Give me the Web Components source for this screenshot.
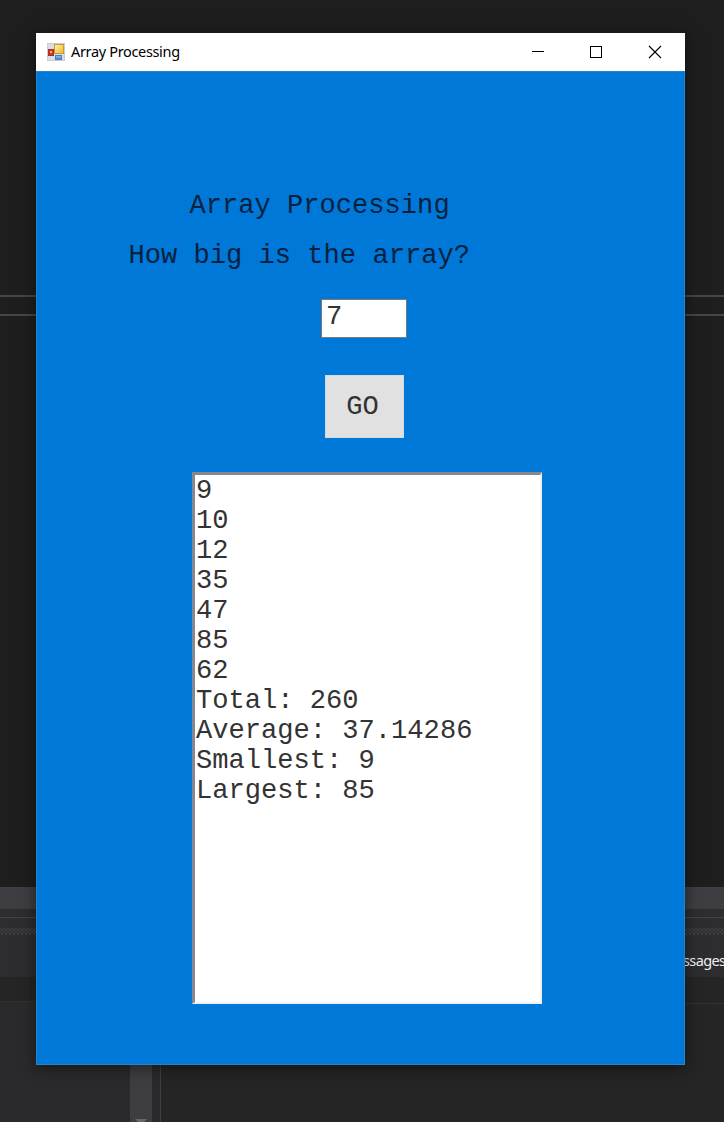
<!DOCTYPE html>
<html lang="en"><head><meta charset="utf-8"><title>Array Processing</title>
<style>html,body{margin:0;width:724px;height:1122px;overflow:hidden;background:#1e1e1e}</style></head>
<body>
<desk-top>
  <ide-backdrop slot="back"></ide-backdrop>
  <app-window caption="Array Processing">
    <form-label style="margin:119px 0 0 152.5px">Array Processing</form-label>
    <form-label style="margin:20px 0 0 91.5px">How big is the array?</form-label>
    <text-box style="margin:28px 0 0 284px">7</text-box>
    <push-button style="margin:37px 0 0 288px">GO</push-button>
    <list-box style="margin:34px 0 0 155px">
      <div>9</div><div>10</div><div>12</div><div>35</div><div>47</div><div>85</div><div>62</div>
      <div>Total: 260</div><div>Average: 37.14286</div><div>Smallest: 9</div><div>Largest: 85</div>
    </list-box>
  </app-window>
</desk-top>
<script>
const define = (name, html, setup) => {
  const t = document.createElement('template');
  t.innerHTML = html;
  customElements.define(name, class extends HTMLElement {
    constructor() {
      super();
      this.attachShadow({mode: 'open'}).append(t.content.cloneNode(true));
    }
    connectedCallback() { if (setup) setup(this); }
  });
};

define('desk-top', `<style>
:host{display:block;position:relative;width:724px;height:1122px;overflow:hidden}
::slotted(app-window){position:absolute;left:36px;top:33px}
</style><slot name="back"></slot><slot></slot>`);

define('ide-backdrop', `<style>
:host{display:flex;flex-direction:column;height:1122px;background:#1e1e1e;box-sizing:border-box}
.rule{height:2px;background:#464648;flex:none}
.editor{height:887px;flex:none;display:flex;flex-direction:column;gap:17px;padding-top:295px;box-sizing:border-box}
.scroll{height:22px;background:#3e3e42;flex:none}
.tools{height:68px;background:#2d2d30;flex:none;display:flex;flex-direction:column}
.line{height:1px;background:#434346;margin-top:8px}
.dots{height:7px;margin-top:10px;background-image:radial-gradient(circle,#404043 0.7px,transparent 1px),radial-gradient(circle,#404043 0.7px,transparent 1px);background-size:4px 4px;background-position:0 0,2px 2px}
.tab{font:14.5px/20px "Noto Sans","Open Sans",sans-serif;letter-spacing:-.6px;color:#f1f1f1;align-self:flex-end;margin-top:15px;width:41px;white-space:nowrap}
.pane{flex:1;display:grid;grid-template-columns:130px 22px 8px 1px 1fr;background:#252526}
.left{background:#2a2a2c;border-top:1px solid #323234;margin-top:24px}
.cell{background:#2a2a2c}
.bar{background:#3e3e42;display:flex;flex-direction:column;justify-content:flex-end;align-items:center}
.edge{background:#3f3f43}
.right{border-top:1px solid #333335;margin-top:26px}
svg{display:block}
</style>
<div class="editor"><div class="rule"></div><div class="rule"></div></div>
<div class="scroll"></div>
<div class="tools"><div class="line"></div><div class="dots"></div><div class="tab">ssages</div></div>
<div class="pane"><div class="left"></div><div class="bar"><svg width="12" height="3"><path d="M0 0H12L9 3H3Z" fill="#68686c"/></svg></div><div class="cell"></div><div class="edge"></div><div class="right"></div></div>`);

define('title-bar', `<style>
:host{display:flex;height:38px;background:#fff;align-items:center;padding-left:11px;box-sizing:border-box;color:#000;flex:none}
svg{display:block;flex:none}
.text{font:14.5px/20px "Noto Sans","Open Sans",sans-serif;letter-spacing:-.34px;margin-left:6px;padding-bottom:2px;flex:1;white-space:nowrap}
.buttons{display:flex}
.buttons svg{width:59px;height:38px}
</style>
<svg width="18" height="18" viewBox="0 0 18 18">
<defs><linearGradient id="y" x2="1" y2="1"><stop stop-color="#fff3a4"/><stop offset="1" stop-color="#edb92c"/></linearGradient>
<linearGradient id="b" x2="0" y2="1"><stop stop-color="#9dcaff"/><stop offset="1" stop-color="#337bd1"/></linearGradient></defs>
<rect x=".5" y=".5" width="17" height="17" fill="#dcdce2" stroke="#c9ccd4"/>
<rect x="7.5" y="1.5" width="9" height="9" fill="url(#y)" stroke="#c79a32"/>
<rect x="1.5" y="6.5" width="5" height="6" fill="#c9382e" stroke="#a92e26"/><rect x="3" y="8" width="2" height="2" fill="#f3a797"/>
<rect x="8.5" y="12.5" width="6" height="4" fill="url(#b)" stroke="#4b80bd"/>
</svg>
<span class="text"></span>
<div class="buttons">
<svg viewBox="0 0 59 38"><path d="M24 18.5h12" stroke="#000"/></svg>
<svg viewBox="0 0 59 38"><rect x="23.5" y="13.5" width="11" height="11" fill="none" stroke="#000"/></svg>
<svg viewBox="0 0 59 38"><path d="M23 13l12 12M35 13L23 25" stroke="#000" stroke-width="1.1"/></svg>
</div>`);

define('app-window', `<style>
:host{display:flex;flex-direction:column;width:649px;height:1032px;background:#0078d7;box-shadow:0 3px 14px rgba(0,0,0,.5)}
.client{flex:1;display:flex;flex-direction:column;align-items:flex-start;border:1px solid #2385cf;border-top-color:#2b82c4;box-sizing:border-box;font:27.1px/30px "Liberation Mono",monospace;color:#333}
</style><title-bar></title-bar><div class="client"><slot></slot></div>`,
  el => { el.shadowRoot.querySelector('title-bar').shadowRoot.querySelector('.text').textContent = el.getAttribute('caption'); });

define('form-label', `<style>:host{display:block;height:30px;white-space:pre;color:#06213f}</style><slot></slot>`);
define('text-box', `<style>:host{display:block;width:86px;height:39px;box-sizing:border-box;background:#fff;border:1px solid #7a7a7a;padding:2px 0 0 4px;line-height:30px}</style><slot></slot>`);
define('push-button', `<style>:host{display:flex;width:79px;height:63px;box-sizing:border-box;background:#e1e1e1;border:1px solid #d2dbe2;align-items:center;justify-content:center;padding-right:4px}</style><slot></slot>`);
define('list-box', `<style>:host{display:block;width:350px;height:532px;box-sizing:border-box;background:#fff;border:3px solid;border-color:#828790 #edf1f4 #edf1f4 #828790;border-right-width:2px;border-bottom-width:2px}
::slotted(div){height:30px;white-space:pre;padding-left:1px;position:relative;top:1px}</style><slot></slot>`);
</script>
</body></html>
